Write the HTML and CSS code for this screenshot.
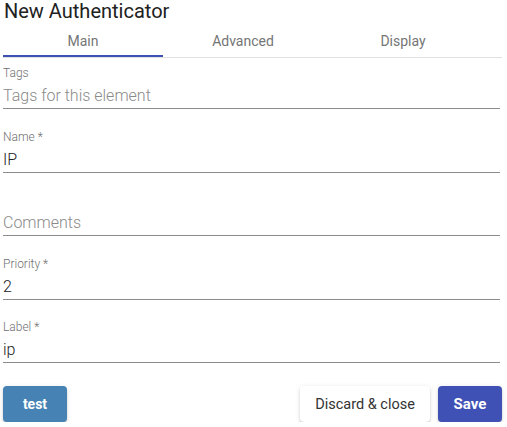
FILE: index.html
```html
<!DOCTYPE html>
<html lang="en">
<head>
<meta charset="utf-8">
<title>New Authenticator</title>
<link rel="stylesheet" href="styles.css">
</head>
<body>
<div class="dialog">
  <h2 class="title">New Authenticator</h2>
  <div class="tabs">
    <div class="tab active">Main</div>
    <div class="tab">Advanced</div>
    <div class="tab">Display</div>
  </div>
  <div class="form">
    <div class="field">
      <div class="label">Tags</div>
      <div class="input placeholder">Tags for this element</div>
    </div>
    <div class="field">
      <div class="label">Name *</div>
      <div class="input">IP</div>
    </div>
    <div class="field">
      <div class="label"></div>
      <div class="input placeholder">Comments</div>
    </div>
    <div class="field">
      <div class="label">Priority *</div>
      <div class="input">2</div>
    </div>
    <div class="field">
      <div class="label">Label *</div>
      <div class="input">ip</div>
    </div>
  </div>
  <div class="actions">
    <button class="btn btn-test">test</button>
    <div class="spacer"></div>
    <button class="btn btn-discard">Discard &amp; close</button>
    <button class="btn btn-save">Save</button>
  </div>
</div>
</body>
</html>
```

FILE: styles.css
```css
* { box-sizing: border-box; }
html, body { margin: 0; padding: 0; background: #fff; }
body {
  font-family: Roboto, "Liberation Sans", Arial, sans-serif;
  color: #212121;
}
.dialog {
  width: 507px;
  padding: 0 5px 0 3px;
}
.title {
  margin: 0 0 3px 1px;
  font-size: 20px;
  line-height: 22px;
  font-weight: 400;
  color: #212121;
}
.tabs {
  display: flex;
  height: 33px;
  border-bottom: 1px solid #e0e0e0;
}
.tab {
  width: 160px;
  height: 32px;
  line-height: 32px;
  text-align: center;
  font-size: 14px;
  color: #757575;
}
.tab.active {
  border-bottom: 2px solid #3f51b5;
}
.form {
  display: flex;
  flex-direction: column;
  gap: 19.5px;
  padding-top: 7px;
  width: 497px;
}
.field {
  display: flex;
  flex-direction: column;
  border-bottom: 1px solid #8c8c8c;
}
.label {
  height: 16px;
  line-height: 16px;
  font-size: 12px;
  font-weight: 300;
  color: #707070;
  margin-bottom: 3px;
}
.input {
  height: 24px;
  line-height: 24px;
  font-size: 16px;
  font-weight: 300;
  color: #212121;
}
.input.placeholder { color: #8a8a8a; }
.actions {
  display: flex;
  align-items: center;
  margin-top: 23px;
  gap: 8px;
}
.spacer { flex: 1; }
.btn {
  height: 36px;
  border: none;
  border-radius: 4px;
  font-family: Roboto, "Liberation Sans", Arial, sans-serif;
  font-size: 14px;
  padding: 0;
  box-shadow: 0 3px 1px -2px rgba(0,0,0,.2), 0 2px 2px 0 rgba(0,0,0,.14), 0 1px 5px 0 rgba(0,0,0,.12);
}
.btn-test {
  width: 64px;
  background: #4682b4;
  color: #fff;
  font-weight: 700;
}
.btn-discard {
  width: 130px;
  background: #fff;
  color: #333;
  font-size: 14.5px;
}
.btn-save {
  width: 64px;
  background: #3f51b5;
  color: #fff;
  font-weight: 700;
  font-size: 15px;
}
```
